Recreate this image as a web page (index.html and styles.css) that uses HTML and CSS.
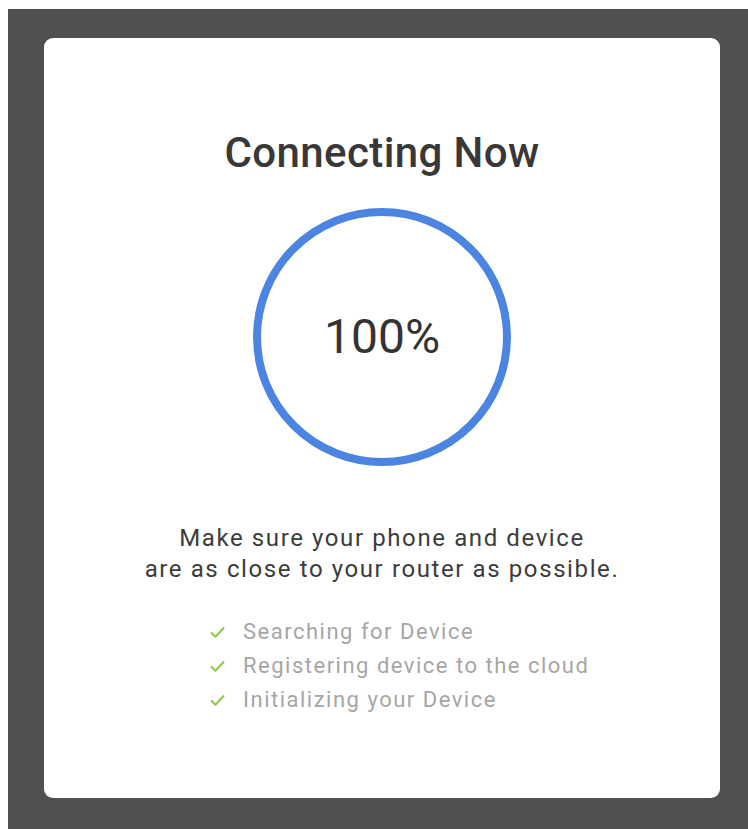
FILE: index.html
```html
<!DOCTYPE html>
<html>
<head>
<meta charset="utf-8">
<link rel="stylesheet" href="styles.css">
</head>
<body>
<div class="frame">
  <div class="card">
    <h1 class="title">Connecting Now</h1>
    <div class="ring"><span class="pct">100%</span></div>
    <p class="note">Make sure your phone and device<br>are as close to your router as possible.</p>
    <ul class="steps">
      <li><svg class="check" viewBox="0 0 14 12" width="15" height="13"><path d="M1.5 6.5 L5 10 L12.5 2" fill="none" stroke="#95c84a" stroke-width="2" stroke-linecap="round" stroke-linejoin="round"/></svg>Searching for Device</li>
      <li><svg class="check" viewBox="0 0 14 12" width="15" height="13"><path d="M1.5 6.5 L5 10 L12.5 2" fill="none" stroke="#95c84a" stroke-width="2" stroke-linecap="round" stroke-linejoin="round"/></svg>Registering device to the cloud</li>
      <li><svg class="check" viewBox="0 0 14 12" width="15" height="13"><path d="M1.5 6.5 L5 10 L12.5 2" fill="none" stroke="#95c84a" stroke-width="2" stroke-linecap="round" stroke-linejoin="round"/></svg>Initializing your Device</li>
    </ul>
  </div>
</div>
</body>
</html>
```
FILE: styles.css
```css
html, body {
  margin: 0;
  padding: 0;
  background: #ffffff;
}
body {
  font-family: Roboto, "Liberation Sans", sans-serif;
  width: 748px;
  height: 829px;
  overflow: hidden;
}
.frame {
  margin: 9px 0 0 8px;
  height: 820px;
  box-sizing: border-box;
  background: #505050;
  padding: 29px 28px 31px 36px;
}
.card {
  background: #ffffff;
  border-radius: 9px;
  height: 760px;
  box-sizing: border-box;
  display: flex;
  flex-direction: column;
  align-items: center;
  padding-top: 91px;
}
.title {
  margin: 0;
  font-size: 42px;
  font-weight: 500;
  color: #383838;
  line-height: 48px;
  letter-spacing: 0.4px;
}
.ring {
  margin-top: 31px;
  width: 258px;
  height: 258px;
  box-sizing: border-box;
  border: 8px solid #4c84e2;
  border-radius: 50%;
  display: flex;
  align-items: center;
  justify-content: center;
}
.pct {
  font-size: 48px;
  font-weight: 400;
  color: #333;
  line-height: 1;
}
.note {
  margin: 57px 0 0;
  text-align: center;
  font-size: 24px;
  line-height: 31px;
  letter-spacing: 1.6px;
  color: #3c3c3c;
}
.steps {
  list-style: none;
  margin: 30px 0 0 166px;
  padding: 0;
  align-self: flex-start;
}
.steps li {
  display: flex;
  align-items: center;
  font-size: 22px;
  line-height: 34px;
  letter-spacing: 1.5px;
  color: #a6a6a6;
}
.check {
  margin-right: 18px;
}
```
